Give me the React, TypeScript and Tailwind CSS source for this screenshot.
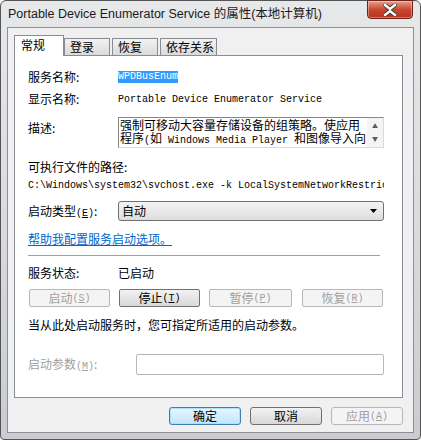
import { ReactNode } from 'react'

const cjk = "font-['Noto_Sans_CJK_SC',sans-serif]"
const mono = "font-['Liberation_Mono','Noto_Sans_CJK_SC',monospace]"

function M({ children, className = '' }: { children: ReactNode; className?: string }) {
  return <span className={`${mono} text-[10px] ${className}`}>{children}</span>
}

function Key({ k }: { k: string }) {
  // 快捷键 (E) 这类
  return (
    <M>
      (<span className="underline">{k}</span>)
    </M>
  )
}

function Tab({ label, w, active = false }: { label: string; w: string; active?: boolean }) {
  if (active) {
    return (
      <div className={`relative z-10 -mb-px flex h-[21px] items-start border border-b-0 border-[#898c95] bg-white pl-[6px] pt-[1px] text-[12px] leading-[16px] ${w}`}>
        {label}
      </div>
    )
  }
  return (
    <div className={`mt-[3px] flex h-[17px] items-start border border-b-0 border-[#898c95] bg-gradient-to-b from-[#f3f3f3] to-[#dadada] pl-[5px] text-[12px] leading-[16px] ${w}`}>
      {label}
    </div>
  )
}

function StatusButton({ label, k, w, enabled = false }: { label: string; k: string; w: string; enabled?: boolean }) {
  return (
    <div
      className={`flex h-[18px] items-center justify-center rounded-[2px] border text-[12px] ${w} ${
        enabled
          ? 'border-[#707070] bg-gradient-to-b from-[#f2f2f2] to-[#d8d8d8] text-black'
          : 'border-[#b5b8bb] bg-[#f4f4f4] text-[#a0a0a0]'
      }`}
    >
      {label}
      <Key k={k} />
    </div>
  )
}

function DialogButton({ children, variant = 'normal' }: { children: ReactNode; variant?: 'default' | 'normal' | 'disabled' }) {
  const cls =
    variant === 'default'
      ? 'border-[#3c7fb1] bg-gradient-to-b from-[#eaf6fd] to-[#bee6fd] shadow-[inset_0_0_0_1px_#aee0f8] text-black'
      : variant === 'disabled'
      ? 'border-[#b5b8bb] bg-[#f4f4f4] text-[#a0a0a0]'
      : 'border-[#707070] bg-gradient-to-b from-[#f2f2f2] to-[#d8d8d8] text-black'
  return (
    <div className={`flex h-[18px] w-[72px] items-center justify-center rounded-[3px] border text-[12px] ${cls}`}>
      {children}
    </div>
  )
}

export default function App() {
  return (
    <div className={`h-[443px] w-[421px] bg-white ${cjk}`}>
      <div className="flex h-[440px] w-[421px] flex-col rounded-t-[6px] rounded-b-[4px] border border-[#555] bg-gradient-to-b from-[#e6e8ea] via-[#d9dbde] to-[#c9ccd0]">
        {/* Title bar */}
        <div className="relative flex h-[26px] items-center pl-[7px]">
          <span className="font-['Liberation_Sans','Noto_Sans_CJK_SC',sans-serif] text-[12.5px] text-[#1b1b1b]">
            Portable Device Enumerator Service 的属性(本地计算机)
          </span>
          <div className="absolute right-[7px] top-[-1px] flex h-[19px] w-[46px] items-center justify-center rounded-b-[4px] border border-[#6d2418] bg-gradient-to-b from-[#e4a08f] via-[#c9462f] to-[#b8321e] shadow-[inset_0_0_0_1px_rgba(255,255,255,0.35)]">
            <svg width="14" height="12" viewBox="0 0 14 12">
              <path d="M2 1 L7 5 L12 1 M2 11 L7 7 L12 11" stroke="#3a3a3a" strokeWidth="4.2" fill="none" strokeLinecap="square" />
              <path d="M2 1 L7 5 L12 1 M2 11 L7 7 L12 11" stroke="#ffffff" strokeWidth="2.4" fill="none" strokeLinecap="square" />
            </svg>
          </div>
        </div>

        {/* Client area */}
        <div className="mx-[6px] flex h-[406px] flex-col border border-[#8f8f8f] bg-[#f0f0f0] pl-[6px] pt-[7px]">
          {/* Tabs */}
          <div className="flex items-end">
            <Tab label="常规" w="w-[50px]" active />
            <Tab label="登录" w="w-[46px]" />
            <div className="ml-[2px]">
              <Tab label="恢复" w="w-[46px]" />
            </div>
            <div className="ml-[2px]">
              <Tab label="依存关系" w="w-[57px]" />
            </div>
          </div>
          <div className="flex h-[343px] w-[389px] flex-col border border-[#898c95] bg-white pl-[13px] text-[12px] text-black">
            <div className="mt-[14px] flex h-[14px] items-center">
              <div className="w-[90px]">服务名称:</div>
              <M className="bg-[#3399ff] text-white leading-[12px]">WPDBusEnum</M>
            </div>
            <div className="mt-[8px] flex h-[14px] items-center">
              <div className="w-[90px]">显示名称:</div>
              <M>Portable Device Enumerator Service</M>
            </div>
            <div className="mt-[11px] flex">
              <div className="w-[90px] pt-[4px] leading-[14px]">描述:</div>
              <div className="flex h-[31px] w-[266px] border border-[#828790] border-r-[#dadada] border-b-[#dadada]">
                <div className="flex-1 whitespace-nowrap pl-[1px] text-[12px] leading-[13px]">
                  <div className="h-[13px]">强制可移动大容量存储设备的组策略。使应用</div>
                  <div className="h-[13px]">
                    程序<M className="leading-[12px]">(</M>如<M className="leading-[12px]"> Windows Media Player </M>和图像导入向
                  </div>
                </div>
                <div className="flex w-[16px] flex-col items-center justify-between bg-[#f4f4f4] py-[5px] text-[6px] leading-[6px] text-[#5a5a5a]">
                  <span>▲</span>
                  <span>▼</span>
                </div>
              </div>
            </div>
            <div className="mt-[12px] h-[14px] leading-[14px]">可执行文件的路径:</div>
            <div className="mt-[2px] w-[356px] overflow-hidden whitespace-nowrap leading-[14px]">
              <M>C:\Windows\system32\svchost.exe -k LocalSystemNetworkRestricted</M>
            </div>
            <div className="mt-[8px] flex items-center">
              <div className="w-[90px]">
                启动类型<Key k="E" />:
              </div>
              <div className="flex h-[20px] w-[266px] items-center justify-between rounded-[3px] border border-[#707070] bg-gradient-to-b from-[#f4f4f4] to-[#dedede] pl-[3px] pr-[6px]">
                <span>自动</span>
                <svg width="7" height="4" viewBox="0 0 7 4">
                  <path d="M0 0 H7 L3.5 4 Z" fill="#000" />
                </svg>
              </div>
            </div>
            <div className="mt-[11px] h-[14px] leading-[14px]">
              <span className="text-[#0066cc] underline">帮助我配置服务启动选项。</span>
            </div>
            <div className="mt-[9px] h-px w-[352px] bg-[#a0a0a0]" />
            <div className="mt-[10px] flex h-[14px] items-center">
              <div className="w-[90px]">服务状态:</div>
              <span>已启动</span>
            </div>
            <div className="ml-[1px] mt-[9px] flex">
              <StatusButton label="启动" k="S" w="w-[81px]" />
              <div className="ml-[9px]">
                <StatusButton label="停止" k="T" w="w-[81px]" enabled />
              </div>
              <div className="ml-[9px]">
                <StatusButton label="暂停" k="P" w="w-[83px]" />
              </div>
              <div className="ml-[10px]">
                <StatusButton label="恢复" k="R" w="w-[81px]" />
              </div>
            </div>
            <div className="mt-[11px] h-[14px] leading-[14px]">当从此处启动服务时，您可指定所适用的启动参数。</div>
            <div className="mt-[22px] flex items-center">
              <div className="w-[108px] text-[#a0a0a0]">
                启动参数<Key k="M" />:
              </div>
              <div className="h-[21px] w-[248px] rounded-[2px] border border-[#b5b8bb] bg-white" />
            </div>
          </div>
          {/* Dialog buttons */}
          <div className="mt-[9px] flex w-[389px] justify-end gap-[9px]">
            <DialogButton variant="default">确定</DialogButton>
            <DialogButton>取消</DialogButton>
            <DialogButton variant="disabled">
              应用<Key k="A" />
            </DialogButton>
          </div>
        </div>
      </div>
    </div>
  )
}
